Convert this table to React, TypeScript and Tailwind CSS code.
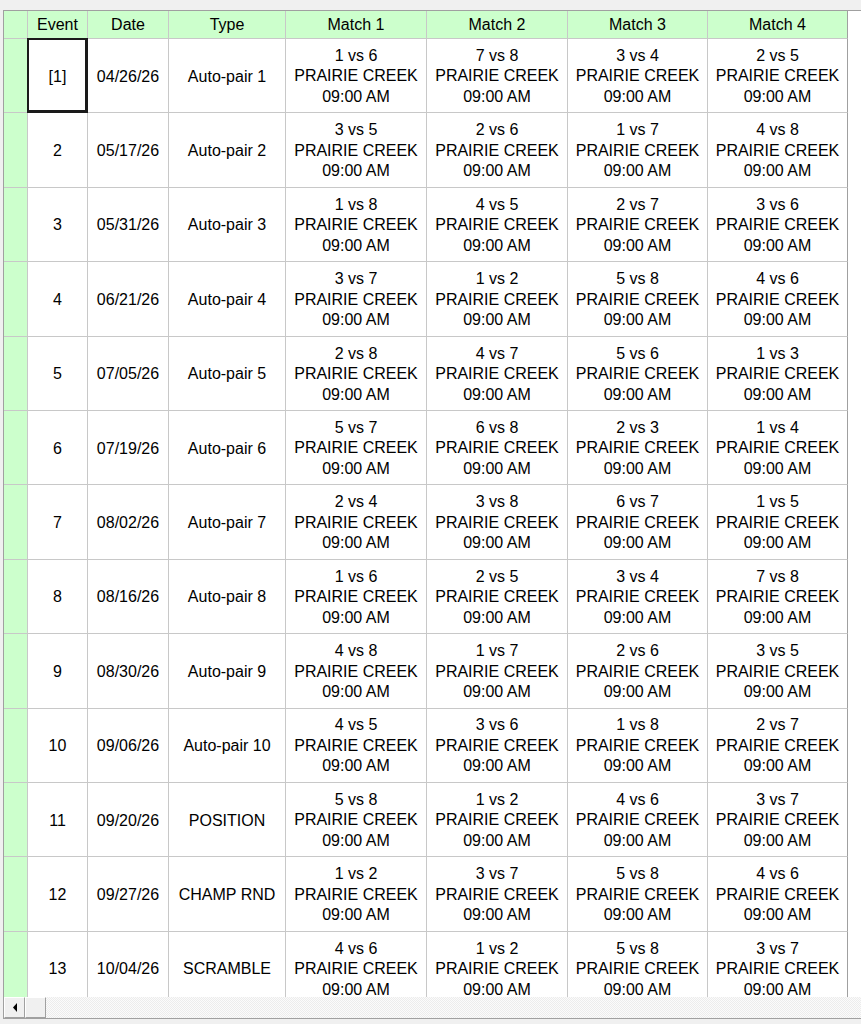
import React from 'react';

interface EventRow {
  event: string;
  date: string;
  type: string;
  matches: string[];
}

const rows: EventRow[] = [
  { event: '[1]', date: '04/26/26', type: 'Auto-pair 1', matches: ['1 vs 6', '7 vs 8', '3 vs 4', '2 vs 5'] },
  { event: '2', date: '05/17/26', type: 'Auto-pair 2', matches: ['3 vs 5', '2 vs 6', '1 vs 7', '4 vs 8'] },
  { event: '3', date: '05/31/26', type: 'Auto-pair 3', matches: ['1 vs 8', '4 vs 5', '2 vs 7', '3 vs 6'] },
  { event: '4', date: '06/21/26', type: 'Auto-pair 4', matches: ['3 vs 7', '1 vs 2', '5 vs 8', '4 vs 6'] },
  { event: '5', date: '07/05/26', type: 'Auto-pair 5', matches: ['2 vs 8', '4 vs 7', '5 vs 6', '1 vs 3'] },
  { event: '6', date: '07/19/26', type: 'Auto-pair 6', matches: ['5 vs 7', '6 vs 8', '2 vs 3', '1 vs 4'] },
  { event: '7', date: '08/02/26', type: 'Auto-pair 7', matches: ['2 vs 4', '3 vs 8', '6 vs 7', '1 vs 5'] },
  { event: '8', date: '08/16/26', type: 'Auto-pair 8', matches: ['1 vs 6', '2 vs 5', '3 vs 4', '7 vs 8'] },
  { event: '9', date: '08/30/26', type: 'Auto-pair 9', matches: ['4 vs 8', '1 vs 7', '2 vs 6', '3 vs 5'] },
  { event: '10', date: '09/06/26', type: 'Auto-pair 10', matches: ['4 vs 5', '3 vs 6', '1 vs 8', '2 vs 7'] },
  { event: '11', date: '09/20/26', type: 'POSITION', matches: ['5 vs 8', '1 vs 2', '4 vs 6', '3 vs 7'] },
  { event: '12', date: '09/27/26', type: 'CHAMP RND', matches: ['1 vs 2', '3 vs 7', '5 vs 8', '4 vs 6'] },
  { event: '13', date: '10/04/26', type: 'SCRAMBLE', matches: ['4 vs 6', '1 vs 2', '5 vs 8', '3 vs 7'] },
];

const matchWidths = ['w-[141px]', 'w-[141px]', 'w-[140px]', 'w-[140px]'];

const cell = 'border-r border-b border-[#c8c8c8] flex items-center justify-center text-center shrink-0';

export default function App() {
  return (
    <div className="w-[861px] h-[1024px] overflow-hidden bg-[#f0f0f0] pt-[10px] pl-[3px] font-['Liberation_Sans',Arial,sans-serif] text-[16px] text-black">
      <div className="h-[1009px] flex flex-col bg-white border-l border-t border-b border-[#a0a0a0]">
        {/* Grid */}
        <div className="flex-1 overflow-hidden">
          {/* Header */}
          <div className="flex h-[28px]">
            <div className={`${cell} w-[24px] bg-[#ccffcc]`} />
            <div className={`${cell} w-[60px] bg-[#ccffcc]`}>Event</div>
            <div className={`${cell} w-[81px] bg-[#ccffcc]`}>Date</div>
            <div className={`${cell} w-[117px] bg-[#ccffcc]`}>Type</div>
            {['Match 1', 'Match 2', 'Match 3', 'Match 4'].map((m, i) => (
              <div
                key={m}
                className={`${cell} ${matchWidths[i]} bg-[#ccffcc] ${i === 3 ? 'border-r-[#a0a0a0]' : ''}`}
              >
                {m}
              </div>
            ))}
          </div>

          {/* Rows */}
          {rows.map((row, idx) => (
            <div key={row.event} className="flex h-[74.4px]">
              <div className={`${cell} w-[24px] bg-[#ccffcc]`} />
              <div className={`${cell} w-[60px] pt-[2px] relative`}>
                {idx === 0 && (
                  <div className="absolute -top-px -left-px right-[-1px] bottom-[-1px] border-2 border-r-[3px] border-b-[3px] border-[#1a1a1a]" />
                )}
                {row.event}
              </div>
              <div className={`${cell} w-[81px] pt-[2px]`}>{row.date}</div>
              <div className={`${cell} w-[117px] pt-[2px]`}>{row.type}</div>
              {row.matches.map((m, i) => (
                <div
                  key={i}
                  className={`${cell} ${matchWidths[i]} pt-[2px] flex-col leading-[20.5px] ${i === 3 ? 'border-r-[#a0a0a0]' : ''}`}
                >
                  <div>{m}</div>
                  <div>PRAIRIE CREEK</div>
                  <div>09:00 AM</div>
                </div>
              ))}
            </div>
          ))}
        </div>

        {/* Horizontal scrollbar */}
        <div className="h-[21px] flex shrink-0">
          <div className="w-[21px] h-full bg-[#f0f0f0] border-t border-l border-white border-r border-b border-r-[#a0a0a0] border-b-[#a0a0a0] flex items-center justify-center">
            <svg width="5" height="9" viewBox="0 0 5 9">
              <path d="M5 0 L1 4.5 L5 9 Z" fill="#000" />
            </svg>
          </div>
          <div className="w-[21px] h-full bg-[#f0f0f0] border-t border-l border-white border-r border-b border-r-[#a0a0a0] border-b-[#a0a0a0]" />
          <div className="flex-1 h-full bg-[repeating-conic-gradient(#ececec_0%_25%,#fbfbfb_0%_50%)] bg-size-[2px_2px]" />
        </div>
      </div>
    </div>
  );
}
